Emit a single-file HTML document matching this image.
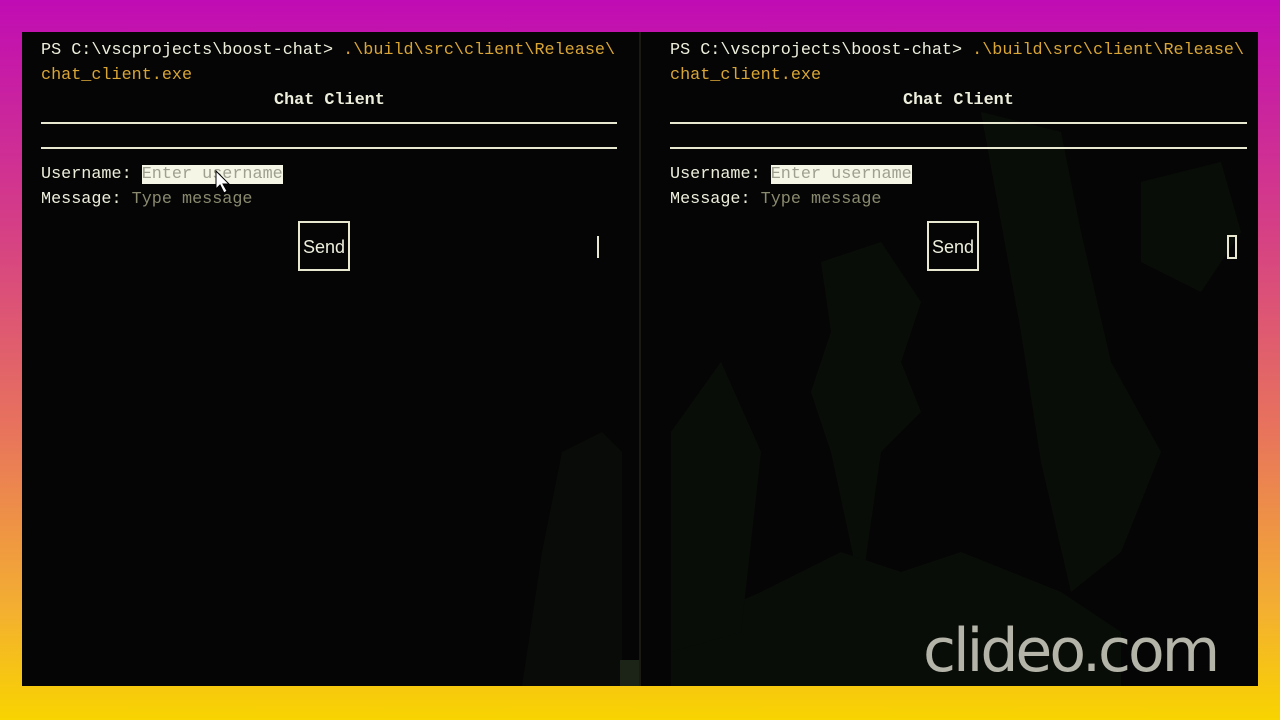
<!DOCTYPE html>
<html><head><meta charset="utf-8"><style>
html,body{margin:0;padding:0;width:1280px;height:720px;overflow:hidden}
body{background:linear-gradient(180deg,#c00cb4 0%,#d43c88 30%,#e8745c 60%,#f4b030 85%,#f8d400 100%);position:relative;font-family:"Liberation Mono",monospace;font-size:16.8px}
.panel{position:absolute;top:32px;height:654px;background:#050505;overflow:hidden}
.t{position:absolute;white-space:pre;color:#eeeedd;line-height:25px}
.y{color:#d9a636}
.hr{position:absolute;height:2px;background:#e8e8d0}
.ph{color:#8a8a70}
.inp{background:#f6f6e6;color:#a0a090}
.btn{position:absolute;border:2px solid #e8e8d0;width:48px;height:46px;color:#eeeedd;font-family:"Liberation Sans",sans-serif;font-size:18px;line-height:48px;text-align:center}
</style></head><body>
<div class="panel" style="left:22px;width:617px">
  <svg style="position:absolute;left:0;top:0" width="617" height="654"><path d="M540 420 L580 400 L600 420 L600 654 L500 654 L520 520 Z" fill="#080b07"/><rect x="598" y="628" width="19" height="26" fill="#1c2418"/></svg>
</div>
<div style="position:absolute;left:639px;top:32px;width:2px;height:654px;background:#1a1a12"></div>
<div class="panel" style="left:641px;width:617px">
  <svg style="position:absolute;left:0;top:0" width="617" height="654"><g fill="#090d08">
  <path d="M180 230 L240 210 L280 270 L260 330 L280 380 L240 420 L220 560 L190 420 L170 360 L190 300 Z"/>
  <path d="M340 80 L420 100 L440 200 L470 330 L520 420 L480 520 L430 560 L400 430 L380 300 Z"/>
  <path d="M30 600 L120 560 L200 520 L260 540 L320 520 L420 560 L480 600 L480 654 L30 654 Z"/>
  <path d="M30 400 L80 330 L120 420 L100 600 L30 620 Z"/>
  <path d="M500 150 L580 130 L600 200 L560 260 L500 230 Z"/>
  </g></svg>
  <div style="position:absolute;left:282px;top:584px;font-family:'DejaVu Sans',sans-serif;font-size:60px;color:#b4b4a8;letter-spacing:-3px;line-height:70px">clideo.com</div>
</div>

<div class="t" style="left:41px;top:38px">PS C:\vscprojects\boost-chat&gt; <span class="y">.\build\src\client\Release\</span></div>
<div class="t y" style="left:41px;top:63px">chat_client.exe</div>
<div class="t" style="left:274px;top:88px;font-weight:bold">Chat Client</div>
<div class="hr" style="left:41px;width:576px;top:122px"></div>
<div class="hr" style="left:41px;width:576px;top:147px"></div>
<div class="t" style="left:41px;top:162px">Username: <span class="inp">Enter username</span></div>
<div class="t" style="left:41px;top:187px">Message: <span class="ph">Type message</span></div>
<div class="btn" style="left:298px;top:221px">Send</div>
<div style="position:absolute;left:597px;top:236px;width:2px;height:22px;background:#e8e8d0"></div>
<svg style="position:absolute;left:214px;top:169px" width="18" height="26"><path d="M2 2 L2 20 L6 16 L10 24 L13 22 L9 15 L15 15 Z" fill="#fff" stroke="#000" stroke-width="1"/></svg>

<div class="t" style="left:670px;top:38px">PS C:\vscprojects\boost-chat&gt; <span class="y">.\build\src\client\Release\</span></div>
<div class="t y" style="left:670px;top:63px">chat_client.exe</div>
<div class="t" style="left:903px;top:88px;font-weight:bold">Chat Client</div>
<div class="hr" style="left:670px;width:577px;top:122px"></div>
<div class="hr" style="left:670px;width:577px;top:147px"></div>
<div class="t" style="left:670px;top:162px">Username: <span class="inp">Enter username</span></div>
<div class="t" style="left:670px;top:187px">Message: <span class="ph">Type message</span></div>
<div class="btn" style="left:927px;top:221px">Send</div>
<div style="position:absolute;left:1227px;top:235px;width:6px;height:20px;border:2px solid #e8e8d0"></div>
</body></html>
